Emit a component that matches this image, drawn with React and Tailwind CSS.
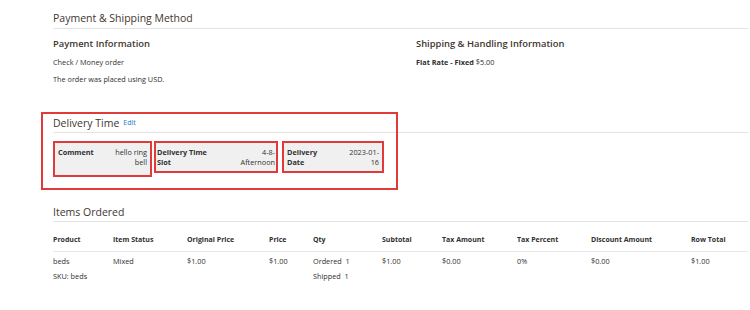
export default function App() {
  const cols = [
    { label: "Product", w: "w-[60px]" },
    { label: "Item Status", w: "w-[74px]" },
    { label: "Original Price", w: "w-[82px]" },
    { label: "Price", w: "w-[44px]" },
    { label: "Qty", w: "w-[69px]" },
    { label: "Subtotal", w: "w-[60px]" },
    { label: "Tax Amount", w: "w-[75px]" },
    { label: "Tax Percent", w: "w-[74px]" },
    { label: "Discount Amount", w: "w-[100px]" },
    { label: "Row Total", w: "w-[57px]" },
  ];

  return (
    <div className="w-[750px] h-[310px] bg-white font-['Open_Sans',sans-serif] text-[#303030] pl-[53px] pr-[2px] pt-[9px] relative overflow-hidden">
      {/* Payment & Shipping */}
      <div className="h-[20px] text-[10.5px] leading-[18px] text-[#41362f] border-b border-[#e3e3e3]">
        Payment &amp; Shipping Method
      </div>
      <div className="flex mt-[8px]">
        <div className="w-[363px]">
          <div className="text-[9.4px] font-semibold leading-[14px] text-[#41362f]">Payment Information</div>
          <div className="text-[7.3px] leading-[17px] mt-[3px]">Check / Money order</div>
          <div className="text-[7.3px] leading-[17px]">The order was placed using USD.</div>
        </div>
        <div>
          <div className="text-[9.4px] font-semibold leading-[14px] text-[#41362f]">Shipping &amp; Handling Information</div>
          <div className="text-[7.3px] leading-[17px] mt-[3px]">
            <span className="font-bold">Flat Rate - Fixed</span> $5.00
          </div>
        </div>
      </div>

      {/* Delivery Time */}
      <div className="relative mt-[26px]">
        <div className="absolute left-[-12px] top-[-2px] w-[357px] h-[78px] border-2 border-[#e03a3a] pointer-events-none" />
        <div className="flex items-start gap-[4px] h-[19px] border-b border-[#e3e3e3]">
          <span className="text-[10.5px] leading-[18px] text-[#41362f]">Delivery Time</span>
          <span className="text-[7px] leading-[17px] text-[#1979c3]">Edit</span>
        </div>
        <div className="flex items-start mt-[8px] text-[7.3px] leading-[10px]">
          <div className="w-[99px] h-[36px] bg-[#f0f0f0] border-2 border-[#e03a3a] flex px-[3px] pt-[4px]">
            <div className="font-bold w-[46px]">Comment</div>
            <div className="flex-1 text-right pl-[4px]">hello ring bell</div>
          </div>
          <div className="w-[124px] h-[32px] ml-[2px] bg-[#f0f0f0] border-2 border-[#e03a3a] flex justify-between px-[1px] pt-[4px]">
            <div className="font-bold w-[54px]">Delivery Time Slot</div>
            <div className="w-[42px] text-right">4-8-Afternoon</div>
          </div>
          <div className="w-[102px] h-[32px] ml-[4px] bg-[#f0f0f0] border-2 border-[#e03a3a] flex px-[3px] pt-[4px]">
            <div className="font-bold w-[40px]">Delivery Date</div>
            <div className="flex-1 text-right pl-[14px]">2023-01-16</div>
          </div>
        </div>
      </div>

      {/* Items Ordered */}
      <div className="mt-[26px] h-[19px] text-[10.5px] leading-[18px] text-[#41362f] border-b border-[#e3e3e3]">
        Items Ordered
      </div>
      <div className="mt-[9px] text-[7.3px]">
        <div className="flex font-bold text-[7px] leading-[18px] h-[21px] border-b border-[#e9e9e9]">
          {cols.map((c) => (
            <div key={c.label} className={c.w}>
              {c.label}
            </div>
          ))}
        </div>
        <div className="flex leading-[15px] pt-[2px]">
          <div className="w-[60px]">
            <div>beds</div>
            <div>SKU: beds</div>
          </div>
          <div className="w-[74px]">Mixed</div>
          <div className="w-[82px]">$1.00</div>
          <div className="w-[44px]">$1.00</div>
          <div className="w-[69px]">
            <div>Ordered&nbsp;&nbsp;1</div>
            <div>Shipped&nbsp;&nbsp;1</div>
          </div>
          <div className="w-[60px]">$1.00</div>
          <div className="w-[75px]">$0.00</div>
          <div className="w-[74px]">0%</div>
          <div className="w-[100px]">$0.00</div>
          <div className="w-[57px]">$1.00</div>
        </div>
      </div>
    </div>
  );
}
